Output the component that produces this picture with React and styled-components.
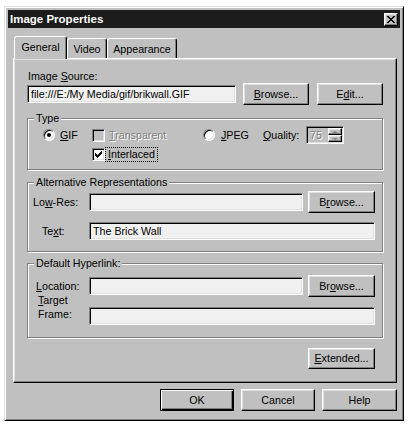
import styled, { createGlobalStyle, css } from 'styled-components';

const GlobalStyle = createGlobalStyle`
  html, body {
    margin: 0;
    background: #fff;
  }
  body {
    font-family: "Liberation Sans", Arial, sans-serif;
    font-size: 10.7px;
    color: #000;
  }
  * {
    box-sizing: border-box;
  }
`;

const raised = css`
  background: #c0c0c0;
  border: 1px solid;
  border-color: #fff #000 #000 #fff;
  box-shadow: inset -1px -1px #808080, inset 1px 1px #dfdfdf;
`;

const sunken = css`
  border: 1px solid;
  border-color: #808080 #fff #fff #808080;
  box-shadow: inset 1px 1px #000, inset -1px -1px #dfdfdf;
`;

const Window = styled.div`
  width: 400px;
  height: 415px;
  margin: 6px 0 0 4px;
  padding: 3px;
  display: flex;
  flex-direction: column;
  background: #c0c0c0;
  border: 1px solid;
  border-color: #dfdfdf #000 #000 #dfdfdf;
  box-shadow: inset 1px 1px #fff, inset -1px -1px #808080;
`;

const TitleBar = styled.div`
  height: 18px;
  display: flex;
  align-items: center;
  justify-content: space-between;
  padding: 0 2px 0 2px;
  background: #1c1c1c;
  color: #fff;
  font-weight: bold;
  font-size: 11.5px;
`;

const CloseButton = styled.div`
  ${raised};
  width: 14px;
  height: 13px;
  display: flex;
  align-items: center;
  justify-content: center;
`;

const Body = styled.div`
  flex: 1;
  display: flex;
  flex-direction: column;
  padding: 8px 3px 6px 5px;
`;

const Tabs = styled.div`
  height: 22px;
  display: flex;
  align-items: flex-end;
  margin-left: 1px;
`;

const Tab = styled.div`
  position: relative;
  z-index: ${(p) => (p.$active ? 1 : 0)};
  width: ${(p) => p.$w}px;
  height: ${(p) => (p.$active ? 23 : 20)}px;
  margin-bottom: ${(p) => (p.$active ? -1 : 0)}px;
  padding-bottom: ${(p) => (p.$active ? 2 : 0)}px;
  display: flex;
  align-items: center;
  justify-content: center;
  background: #c0c0c0;
  border: 1px solid;
  border-bottom: none;
  border-color: #fff #000 transparent #fff;
  border-radius: 3px 3px 0 0;
  box-shadow: inset -1px 0 #808080;
`;

const Panel = styled.div`
  height: 325px;
  display: flex;
  flex-direction: column;
  padding: 10px 13px 0;
  border: 1px solid;
  border-color: #fff #000 #000 #fff;
  box-shadow: inset -1px -1px #808080, inset 1px 1px #dfdfdf;
`;

const Caption = styled.div`
  line-height: 14px;
  padding-left: 1px;
`;

const SourceRow = styled.div`
  height: 22px;
  display: flex;
  align-items: center;
`;

const Field = styled.input`
  ${sunken};
  height: 18px;
  width: ${(p) => (p.$w ? `${p.$w}px` : 'auto')};
  flex: ${(p) => (p.$w ? 'none' : 1)};
  min-width: 0;
  margin: 0;
  padding: 0 3px;
  background: #f0f0f0;
  font: inherit;
  color: #000;
  outline: none;
`;

const Button = styled.div`
  ${raised};
  width: ${(p) => p.$w}px;
  height: ${(p) => p.$h || 22}px;
  margin-left: ${(p) => p.$ml || 0}px;
  flex: none;
  display: flex;
  align-items: center;
  justify-content: center;
  padding-bottom: 1px;

  ${(p) => p.$default && css`
    border: 1px solid #000;
    box-shadow: inset 1px 1px #fff, inset -1px -1px #000, inset -2px -2px #808080;
  `}
`;

const Group = styled.fieldset`
  margin: ${(p) => p.$mt}px 0 0;
  padding: 0;
  min-width: 0;
  border: 1px solid #808080;
  box-shadow: inset 1px 1px #fff, 1px 1px #fff;
`;

const Legend = styled.legend`
  margin-left: 6px;
  padding: 0 2px;
  line-height: 14px;
  background: #c0c0c0;
`;

const TypeGrid = styled.div`
  display: grid;
  grid-template-columns: 49px 111px 60px 43px 38px;
  grid-template-rows: 16px 16px;
  row-gap: 3px;
  align-items: center;
  padding: 2px 0 7px 15px;
`;

const Option = styled.div`
  display: flex;
  align-items: center;
  gap: ${(p) => p.$gap || 5}px;
  grid-column: ${(p) => p.$col};
  grid-row: ${(p) => p.$row || 1};
  color: ${(p) => (p.$disabled ? '#808080' : '#000')};
  text-shadow: ${(p) => (p.$disabled ? '1px 1px #fff' : 'none')};
`;

const Radio = styled.span`
  width: 12px;
  height: 12px;
  flex: none;
  display: flex;
  align-items: center;
  justify-content: center;
  border-radius: 50%;
  background: #fff;
  ${sunken};

  &::after {
    content: '';
    width: 4px;
    height: 4px;
    border-radius: 50%;
    background: ${(p) => (p.$checked ? '#000' : 'transparent')};
  }
`;

const Check = styled.span`
  width: 13px;
  height: 13px;
  flex: none;
  display: flex;
  align-items: center;
  justify-content: center;
  background: ${(p) => (p.$disabled ? '#c0c0c0' : '#fff')};
  ${sunken};
`;

const Focus = styled.span`
  outline: 1px dotted #000;
  outline-offset: 0;
  padding: 0 2px;
  margin-left: -3px;
  line-height: 13px;
`;

const Spin = styled.div`
  ${sunken};
  width: 38px;
  height: 18px;
  padding: 1px 1px 1px 3px;
  display: flex;
  align-items: center;
  justify-content: space-between;
  background: #c0c0c0;
  color: #808080;
  text-shadow: 1px 1px #fff;
  grid-column: 5;
`;

const SpinStack = styled.div`
  width: 14px;
  height: 14px;
  display: flex;
  flex-direction: column;
`;

const SpinButton = styled.div`
  ${raised};
  height: 7px;
  display: flex;
  align-items: center;
  justify-content: center;
`;

const Arrow = styled.span`
  width: 0;
  height: 0;
  border-left: 3px solid transparent;
  border-right: 3px solid transparent;
  ${(p) => (p.$up
    ? 'border-bottom: 2px solid #808080;'
    : 'border-top: 2px solid #808080;')}
`;

const FormGrid = styled.div`
  display: grid;
  grid-template-columns: 51px 214px 67px;
  grid-template-rows: 22px 18px;
  column-gap: 5px;
  row-gap: ${(p) => p.$gap}px;
  align-items: center;
  padding: ${(p) => p.$pad};
`;

const Label = styled.div`
  padding-left: ${(p) => p.$indent || 0}px;
  line-height: 14px;
  white-space: nowrap;
  align-self: ${(p) => (p.$top ? 'start' : 'center')};
  margin-top: ${(p) => (p.$top ? -14 : 0)}px;
`;

const Wide = styled(Field)`
  grid-column: 2 / 4;
`;

const ExtendedRow = styled.div`
  display: flex;
  justify-content: flex-end;
  margin-top: 10px;
  padding-right: 8px;
`;

const ButtonRow = styled.div`
  display: flex;
  justify-content: flex-end;
  gap: 7px;
  margin-top: 6px;
`;

const X_PIXELS = [
  'xx....xx',
  '.xx..xx.',
  '..xxxx..',
  '...xx...',
  '..xxxx..',
  '.xx..xx.',
  'xx....xx',
];

function CloseGlyph() {
  return (
    <svg width="8" height="7" viewBox="0 0 8 7" shapeRendering="crispEdges">
      {X_PIXELS.flatMap((row, y) => row.split('').map((c, x) => (c === 'x'
        ? <rect key={`${x}-${y}`} x={x} y={y} width="1" height="1" fill="#000" />
        : null)))}
    </svg>
  );
}

function CheckGlyph() {
  return (
    <svg width="7" height="7" viewBox="0 0 7 7" shapeRendering="crispEdges">
      <path d="M0 2 L2 4 L6 0 L7 0 L7 3 L2 7 L0 5 Z" fill="#000" />
    </svg>
  );
}

export default function App() {
  return (
    <>
      <GlobalStyle />
      <Window>
        <TitleBar>
          <span>Image Properties</span>
          <CloseButton><CloseGlyph /></CloseButton>
        </TitleBar>
        <Body>
          <Tabs>
            <Tab $active $w={53}>General</Tab>
            <Tab $w={40}>Video</Tab>
            <Tab $w={70}>Appearance</Tab>
          </Tabs>
          <Panel>
            <Caption>Image <u>S</u>ource:</Caption>
            <SourceRow>
              <Field readOnly defaultValue="file:///E:/My Media/gif/brikwall.GIF" />
              <Button $w={66} $ml={7}><span><u>B</u>rowse...</span></Button>
              <Button $w={66} $ml={8}><span>E<u>d</u>it...</span></Button>
            </SourceRow>

            <Group $mt={6}>
              <Legend>Type</Legend>
              <TypeGrid>
                <Option $col={1}>
                  <Radio $checked />
                  <span><u>G</u>IF</span>
                </Option>
                <Option $col={2} $gap={4} $disabled>
                  <Check $disabled />
                  <span><u>T</u>ransparent</span>
                </Option>
                <Option $col={2} $row={2} $gap={4}>
                  <Check><CheckGlyph /></Check>
                  <Focus><u>I</u>nterlaced</Focus>
                </Option>
                <Option $col={3} $gap={6}>
                  <Radio />
                  <span><u>J</u>PEG</span>
                </Option>
                <Option $col={4}>
                  <span><u>Q</u>uality:</span>
                </Option>
                <Spin>
                  <span>75</span>
                  <SpinStack>
                    <SpinButton><Arrow $up /></SpinButton>
                    <SpinButton><Arrow /></SpinButton>
                  </SpinStack>
                </Spin>
              </TypeGrid>
            </Group>

            <Group $mt={5}>
              <Legend>Alternative Representations</Legend>
              <FormGrid $gap={9} $pad="2px 7px 11px 5px">
                <Label>Lo<u>w</u>-Res:</Label>
                <Field readOnly defaultValue="" />
                <Button $w={67}><span>B<u>r</u>owse...</span></Button>
                <Label $indent={9}>Te<u>x</u>t:</Label>
                <Wide readOnly defaultValue="The Brick Wall" />
              </FormGrid>
            </Group>

            <Group $mt={4}>
              <Legend>Default Hyperlink:</Legend>
              <FormGrid $gap={10} $pad="5px 7px 12px 5px">
                <Label $indent={3}><u>L</u>ocation:</Label>
                <Field readOnly defaultValue="" />
                <Button $w={67}><span>Br<u>o</u>wse...</span></Button>
                <Label $indent={5} $top><u>T</u>arget<br />Frame:</Label>
                <Wide readOnly defaultValue="" />
              </FormGrid>
            </Group>

            <ExtendedRow>
              <Button $w={67} $h={21}><span><u>E</u>xtended...</span></Button>
            </ExtendedRow>
          </Panel>
          <ButtonRow>
            <Button $default $w={74}>OK</Button>
            <Button $w={74}>Cancel</Button>
            <Button $w={75}>Help</Button>
          </ButtonRow>
        </Body>
      </Window>
    </>
  );
}
